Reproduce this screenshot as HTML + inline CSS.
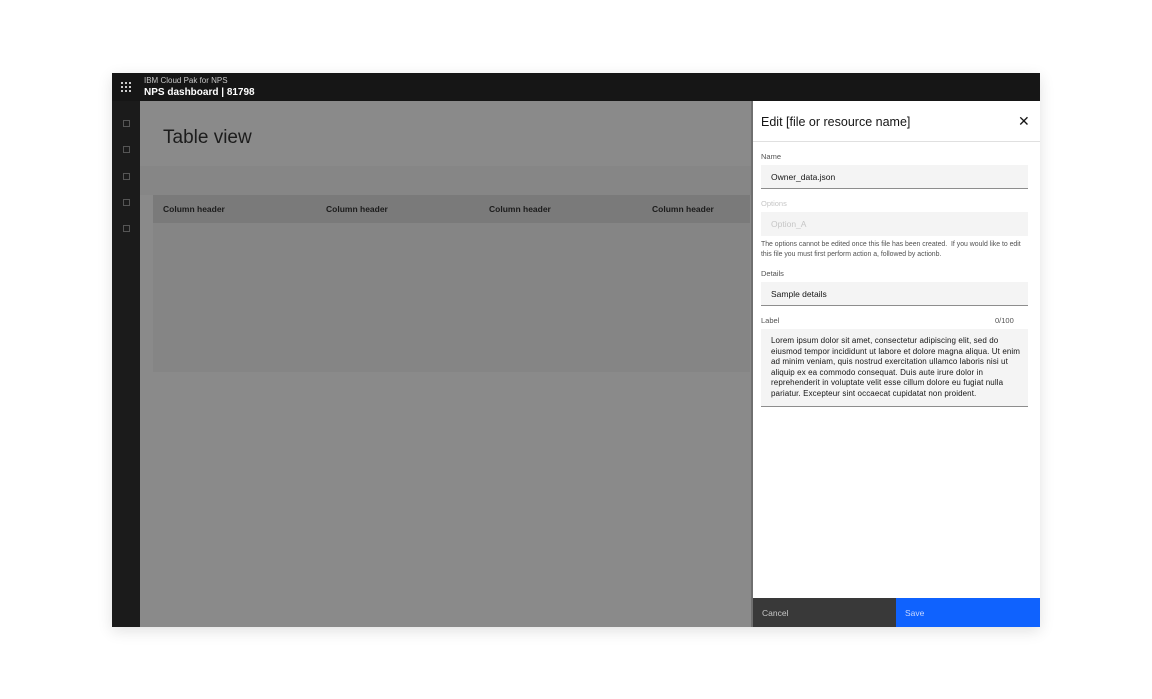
<!DOCTYPE html>
<html><head><style>
*{margin:0;padding:0;box-sizing:border-box}
body{width:1152px;height:699px;background:#fff;font-family:"Liberation Sans",sans-serif;position:relative;overflow:hidden}
.frame{position:absolute;left:112px;top:73px;width:928px;height:554px;box-shadow:0 4px 14px rgba(0,0,0,.12);background:#8b8b8b;overflow:hidden}
.top{position:absolute;left:0;top:0;width:928px;height:28px;background:#161616;color:#fff}
.side{position:absolute;left:0;top:28px;width:28px;height:526px;background:#1b1b1b}
.side i{position:absolute;left:11px;width:7px;height:7px;border:1px solid #555}
.main{position:absolute;left:28px;top:28px;width:613px;height:526px;background:#8a8a8a}
.panel{position:absolute;left:639px;top:28px;width:289px;height:526px;background:#fff;border-left:2px solid #6f6f6f}
.lbl{position:absolute;left:8px;font-size:7.5px;color:#525252}
.fld{position:absolute;left:8px;width:267px;background:#f4f4f4;font-size:8.5px;color:#161616;padding-left:10px}
</style></head><body>
<div class="frame">
 <div class="top">
  <svg style="position:absolute;left:9px;top:9px" width="10" height="10"><g fill="#ccc"><rect x="0" y="0" width="2" height="2"/><rect x="4" y="0" width="2" height="2"/><rect x="8" y="0" width="2" height="2"/><rect x="0" y="4" width="2" height="2"/><rect x="4" y="4" width="2" height="2"/><rect x="8" y="4" width="2" height="2"/><rect x="0" y="8" width="2" height="2"/><rect x="4" y="8" width="2" height="2"/><rect x="8" y="8" width="2" height="2"/></g></svg>
  <div style="position:absolute;left:32px;top:3px;font-size:8px;color:#c6c6c6">IBM Cloud Pak for NPS</div>
  <div style="position:absolute;left:32px;top:14px;font-size:10px;font-weight:bold">NPS dashboard | 81798</div>
 </div>
 <div class="side"><i style="top:19px"></i><i style="top:45px"></i><i style="top:72px"></i><i style="top:98px"></i><i style="top:124px"></i></div>
 <div class="main">
  <div style="position:absolute;left:23px;top:26px;font-size:19px;color:#1c1c1c">Table view</div>
  <div style="position:absolute;left:0;top:65px;width:613px;height:29px;background:#868686"></div>
  <div style="position:absolute;left:13px;top:94px;width:597px;height:28px;background:#7a7a7a;font-size:8.5px;font-weight:bold;color:#1c1c1c">
   <span style="position:absolute;left:10px;top:9px">Column header</span>
   <span style="position:absolute;left:173px;top:9px">Column header</span>
   <span style="position:absolute;left:336px;top:9px">Column header</span>
   <span style="position:absolute;left:499px;top:9px">Column header</span>
  </div>
  <div style="position:absolute;left:13px;top:122px;width:597px;height:149px;background:#858585"></div>
 </div>
 <div class="panel">
  <div style="position:absolute;left:8px;top:14px;font-size:12.5px;color:#161616">Edit [file or resource name]</div>
  <div style="position:absolute;left:265px;top:12px;font-size:14px;color:#161616">✕</div>
  <div style="position:absolute;left:0;top:40px;width:287px;height:1px;background:#e0e0e0"></div>
  <div class="lbl" style="top:51px">Name</div>
  <div class="fld" style="top:64px;height:24px;line-height:24px;border-bottom:1px solid #8d8d8d">Owner_data.json</div>
  <div class="lbl" style="top:98px;color:#c6c6c6">Options</div>
  <div class="fld" style="top:111px;height:24px;line-height:24px;color:#c6c6c6">Option_A</div>
  <div class="lbl" style="top:139px;font-size:6.9px;line-height:10px;width:270px">The options cannot be edited once this file has been created.&nbsp; If you would like to edit this file you must first perform action a, followed by actionb.</div>
  <div class="lbl" style="top:168px">Details</div>
  <div class="fld" style="top:181px;height:24px;line-height:24px;border-bottom:1px solid #8d8d8d">Sample details</div>
  <div class="lbl" style="top:215px">Label</div>
  <div class="lbl" style="top:215px;left:242px">0/100</div>
  <div class="fld" style="top:228px;height:78px;padding-top:7px;line-height:10.5px;font-size:8px;border-bottom:1px solid #8d8d8d;padding-right:2px;letter-spacing:0.1px">Lorem ipsum dolor sit amet, consectetur adipiscing elit, sed do eiusmod tempor incididunt ut labore et dolore magna aliqua. Ut enim ad minim veniam, quis nostrud exercitation ullamco laboris nisi ut aliquip ex ea commodo consequat. Duis aute irure dolor in reprehenderit in voluptate velit esse cillum dolore eu fugiat nulla pariatur. Excepteur sint occaecat cupidatat non proident.</div>
  <div style="position:absolute;left:0;top:497px;width:143px;height:29px;background:#393939;color:#c6c6c6;font-size:8.5px;padding:10px 0 0 9px">Cancel</div>
  <div style="position:absolute;left:143px;top:497px;width:146px;height:29px;background:#0f62fe;color:#c6d6ff;font-size:8.5px;padding:10px 0 0 9px">Save</div>
 </div>
</div>
</body></html>
